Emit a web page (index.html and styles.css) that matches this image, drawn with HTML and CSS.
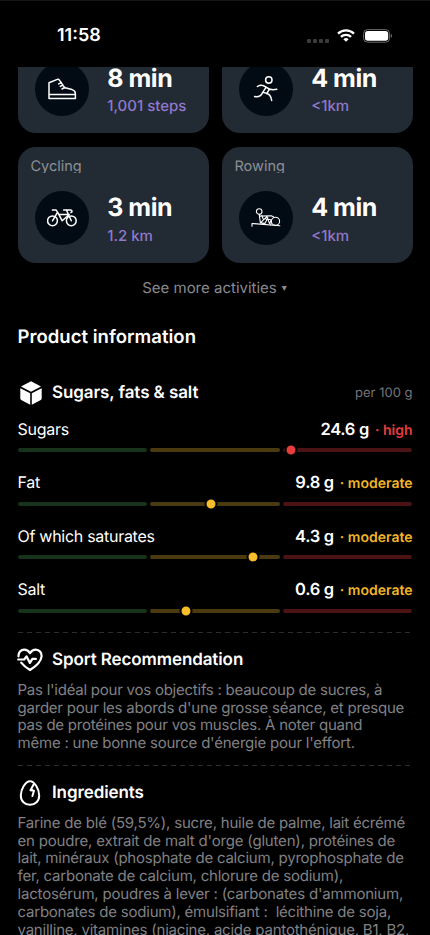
FILE: index.html
```html
<!DOCTYPE html>
<html lang="en">
<head>
<meta charset="utf-8">
<meta name="viewport" content="width=device-width, initial-scale=1">
<title>Product information</title>
<link rel="stylesheet" href="styles.css">
</head>
<body>
<div class="screen">
  <header class="status">
    <span class="time">11:58</span>
    <div class="indicators">
      <span class="dots"><i></i><i></i><i></i><i></i></span>
      <svg class="wifi" viewBox="0 0 18 13" fill="none" stroke="#fff" stroke-width="2.3"><path d="M1 4.7a11.5 11.5 0 0 1 16 0"/><path d="M3.9 7.9a7.3 7.3 0 0 1 10.2 0"/><path d="M9 12.8 6.4 10.2a3.7 3.7 0 0 1 5.2 0z" fill="#fff" stroke="none"/></svg>
      <svg class="battery" viewBox="0 0 30 14"><rect x=".6" y=".6" width="26" height="12.6" rx="4" fill="none" stroke="#6b6b6b"/><rect x="2" y="2" width="23.2" height="9.8" rx="2.8" fill="#fff"/><path d="M27.8 4.8c1.7.6 1.7 3.6 0 4.2z" fill="#6b6b6b"/></svg>
    </div>
  </header>

  <main>
    <section class="cards">
      <article class="card card-cut">
        <div class="card-body">
          <span class="disc"><svg viewBox="0 0 30 30"><path d="M2 8.800 10.300 5.400c.9-.4 1.600-.1 2.100.7l4.500 6.600c.6.8 1.300 1.200 2.200 1.400l5.900 1.500c2 .6 3.400 1.900 3.400 4v5H2zM2 20.400h26.400M11.700 9.900l2.700-1.300M13.300 12.400l2.800-1.400M15 15l2.800-1.600"/></svg></span>
          <div class="stat"><b>8 min</b><span>1,001 steps</span></div>
        </div>
      </article>
      <article class="card card-cut">
        <div class="card-body">
          <span class="disc"><svg viewBox="0 0 30 30"><circle cx="17.800" cy="6" r="3.200"/><path d="M6.400 12.500c3.400-2.300 6-1.500 8.600.6 2.700 2.400 6.500 3.200 10.700 2.200M15.200 13.200l-3.500 5.100c3 .6 5.800 1.500 7.200 3.200 1 1.300 1.500 3 1.800 5M11.700 18.300c-1.200 3.300-3.700 5-8.100 4.300M18.500 15l-2.800 4.600"/></svg></span>
          <div class="stat"><b>4 min</b><span>&lt;1km</span></div>
        </div>
      </article>
      <article class="card">
        <h3>Cycling</h3>
        <div class="card-body">
          <span class="disc"><svg viewBox="0 0 30 30"><circle cx="5.500" cy="17.800" r="4.900"/><circle cx="24.300" cy="17.800" r="4.900"/><path d="M5.500 17.800 10.600 9.200l4.600 8.600M12 11.500h10.200l-7 6.300M19 7h-2.400M24.300 17.800 19.400 7h4.300c1.800.3 1.800 2.100.2 2.500M5.400 7h3.800l2 3.500"/></svg></span>
          <div class="stat"><b>3 min</b><span>1.2 km</span></div>
        </div>
      </article>
      <article class="card">
        <h3>Rowing</h3>
        <div class="card-body">
          <span class="disc"><svg class="thin" viewBox="0 0 30 30"><circle cx="8.200" cy="8.500" r="2.800"/><path d="M1 23.200v-2.600h1.800l26 2.200M8.200 11.300l1.200 8.500 6.500-6.200 2.500 6.800 1.400-2.600M9 13.100l11.200-.3 2.300 1M10.800 12.500l1.700 4.300M9.400 19.800l4.500.6 3-5.600M14.500 15.700l5.200 1"/><circle cx="24.500" cy="18.300" r="4.100"/><path d="M20.400 18.300c0 1.500-.3 2.300-.8 3.500"/></svg></span>
          <div class="stat"><b>4 min</b><span>&lt;1km</span></div>
        </div>
      </article>
    </section>

    <div class="more"><span>See more activities</span><i>▾</i></div>

    <h1>Product information</h1>

    <section class="nutrients">
      <div class="heading">
        <svg class="cube" viewBox="0 0 22 24"><path d="M11 .3 21 5.500 11 10.800 1 5.500z"/><path d="M.3 7.200 10.200 12.300V23.700L1.200 18.900Q.3 18.400.3 17.300zM21.700 7.200 11.800 12.300V23.700l9-4.800q.9-.5.9-1.600z"/></svg>
        <h2>Sugars, fats &amp; salt</h2>
        <span class="per">per 100 g</span>
      </div>
      <div class="nutrient">
        <div class="line"><span>Sugars</span><p class="high"><b>24.6 g</b>· high</p></div>
        <div class="gauge"><i></i><i></i><i></i><em class="red" style="left:69.2%"></em></div>
      </div>
      <div class="nutrient">
        <div class="line"><span>Fat</span><p><b>9.8 g</b>· moderate</p></div>
        <div class="gauge"><i></i><i></i><i></i><em style="left:49%"></em></div>
      </div>
      <div class="nutrient">
        <div class="line"><span>Of which saturates</span><p><b>4.3 g</b>· moderate</p></div>
        <div class="gauge"><i></i><i></i><i></i><em style="left:59.6%"></em></div>
      </div>
      <div class="nutrient">
        <div class="line"><span>Salt</span><p><b>0.6 g</b>· moderate</p></div>
        <div class="gauge"><i></i><i></i><i></i><em style="left:42.7%"></em></div>
      </div>
    </section>

    <svg class="rule" viewBox="0 0 395 1"><path d="M0 .5h395"/></svg>

    <section class="sport">
      <div class="heading">
        <svg class="heart" viewBox="0 0 26 24"><path d="M1.500 8.300C1.300 4.500 3.800 1.600 7.200 1.600c2.600 0 4.500 1.400 5.800 3.600 1.300-2.200 3.200-3.600 5.800-3.600 3.700 0 6.200 3.200 5.700 7.200C23.900 14.100 18 18.800 13 22c-3.400-2-6.600-4.400-8.800-7.300M1.200 11.500h6l2.300-3.200 3.400 6.600 2.500-4h3.500"/></svg>
        <h2>Sport Recommendation</h2>
      </div>
      <p class="text">
        <span class="s1">Pas l'idéal pour vos objectifs : beaucoup de sucres, à</span>
        <span>garder pour les abords d'une grosse séance, et presque</span>
        <span class="s3">pas de protéines pour vos muscles. À noter quand</span>
        <span>même : une bonne source d'énergie pour l'effort.</span>
      </p>
    </section>

    <svg class="rule" viewBox="0 0 395 1"><path d="M0 .5h395"/></svg>

    <section class="ingredients">
      <div class="heading">
        <svg class="egg" viewBox="0 0 26 26"><path d="M13 1.200c4.500 0 9.200 8.200 9.200 14.200 0 5.700-4 9.300-9.200 9.300s-9.200-3.600-9.200-9.300C3.800 9.400 8.500 1.200 13 1.200z"/><path d="M16.600 4.500 13.500 10.300l3.500.5-1.600 5.200M14 9.500l3 1.300"/></svg>
        <h2>Ingredients</h2>
      </div>
      <p class="text">
        <span>Farine de blé (59,5%), sucre, huile de palme, lait écrémé</span>
        <span class="i2">en poudre, extrait de malt d'orge (gluten), protéines de</span>
        <span>lait, minéraux (phosphate de calcium, pyrophosphate de</span>
        <span>fer, carbonate de calcium, chlorure de sodium),</span>
        <span class="i5">lactosérum, poudres à lever : (carbonates d'ammonium,</span>
        <span>carbonates de sodium), émulsifiant :&nbsp; lécithine de soja,</span>
        <span>vanilline, vitamines (niacine, acide pantothénique, B1, B2,</span>
      </p>
    </section>
  </main>
</div>
</body>
</html>
```
FILE: styles.css
```css
* { box-sizing: border-box; margin: 0; padding: 0; }
body { background: #000; color: #fff; font-family: Inter, sans-serif; text-rendering: geometricPrecision; }
i, em { font-style: normal; }
svg { display: block; flex: none; fill: none; }

.screen { width: 430px; height: 935px; overflow: hidden; background: #000; border-top: 1px solid #141414; }
.status { height: 65.5px; padding: 24px 38px 0 57px; display: flex; justify-content: space-between; align-items: flex-start; }
.time { font-size: 18px; line-height: 22px; font-weight: 600; }
.indicators { display: flex; align-items: flex-start; padding-top: 3.5px; }
.dots { display: flex; gap: 2px; margin: 10px 8px 0 0; }
.dots i { width: 4px; height: 4px; border-radius: 1px; background: #3b3b3b; }
.wifi { width: 18px; height: 13px; margin: 0 8px 0 0; }
.battery { width: 30px; height: 14px; margin-right: -1px; }

main { padding: 0 17.5px; }
.cards { display: grid; grid-template-columns: 1fr 1fr; gap: 14px 13px; }
.card { height: 116px; border-radius: 18px; background: #222a33; padding: 11px 13px 0; overflow: hidden; }
.card-cut { height: 66.5px; padding-top: 0; border-radius: 0 0 18px 18px; display: flex; align-items: flex-end; }
.card h3 { height: 15px; overflow: hidden; font-size: 14.5px; line-height: 17px; font-weight: 400; color: #8c9097; }
.card-body { display: flex; align-items: center; gap: 18px; height: 54px; margin: 18px 0 0 4.7px; flex: none; }
.card-cut .card-body { margin: 0 0 17.5px 4.7px; }
.disc { width: 54px; height: 54px; border-radius: 50%; background: #020a13; display: grid; place-items: center; }
.disc svg { width: 30px; height: 30px; stroke: #fff; stroke-width: 1.5; stroke-linecap: round; stroke-linejoin: round; }
.disc .thin { stroke-width: 1.1; }
.stat b { display: block; font-size: 25px; line-height: 32px; font-weight: 700; letter-spacing: -.45px; padding-top: 2px; }
.stat span { display: block; font-size: 15px; line-height: 20px; margin-top: 1.5px; font-weight: 500; color: #9078cc; }

.more { height: 50px; margin-top: -.5px; display: flex; justify-content: center; align-items: center; gap: 5px; font-size: 15px; color: #8a8a8e; padding-right: 1px; }
.more i { font-size: 10px; font-family: "DejaVu Sans", sans-serif; padding-top: 2px; }
h1 { font-size: 18.5px; line-height: 24px; font-weight: 600; margin-top: 12px; letter-spacing: .03px; }

.heading { display: flex; align-items: center; height: 26px; }
.heading h2 { font-size: 17px; line-height: 22px; font-weight: 600; letter-spacing: -.1px; }
.nutrients { padding-top: 31.5px; height: 283px; }
.cube { width: 22px; height: 24px; margin: 0 10.5px 0 2px; fill: #fff; }
.per { margin-left: auto; font-size: 13px; color: #747478; }
.nutrient { height: 53.5px; padding-top: 10.5px; }
.line { display: flex; justify-content: space-between; align-items: center; height: 24px; font-size: 16px; letter-spacing: -.28px; }
.line p { font-size: 14px; font-weight: 600; color: #f0b62b; white-space: pre; }
.line p { letter-spacing: 0; }
.line b { font-size: 16.5px; font-weight: 600; color: #fff; letter-spacing: -.3px; margin-right: 6px; }
.line .high { color: #e53e3d; }
.gauge { position: relative; display: grid; grid-template-columns: repeat(3, 1fr); gap: 3.5px; margin-top: 7.6px; }
.gauge i { height: 4.3px; border-radius: 3px; background: #17331c; }
.gauge i:nth-child(2) { background: #4b3a10; }
.gauge i:nth-child(3) { background: #4c1314; }
.gauge em { position: absolute; top: 50%; width: 13px; height: 13px; border-radius: 50%; border: 2px solid #000; background: #f7bd2b; transform: translate(-50%, -50%); }
.gauge .red { background: #e53e3d; }

.rule { width: 395px; height: 1px; stroke: #2d2d2f; stroke-width: 1; stroke-dasharray: 5 4; }
.sport { height: 132px; padding-top: 14px; }
.ingredients { padding-top: 14px; }
.heart { width: 26px; height: 24px; margin: 0 9px 0 -.5px; stroke: #fff; stroke-width: 2.2; stroke-linecap: round; stroke-linejoin: round; }
.egg { width: 26px; height: 26px; margin: 0 9px 0 -.5px; stroke: #fff; stroke-width: 2; stroke-linecap: round; stroke-linejoin: round; }
.text { font-size: 15px; line-height: 17.8px; color: #808084; margin-top: 8.3px; letter-spacing: -.215px; }
.text span { display: block; width: max-content; white-space: nowrap; }
.text .s1, .text .s3 { letter-spacing: -.24px; }
.text .i2, .text .i5 { letter-spacing: -.185px; }
```
